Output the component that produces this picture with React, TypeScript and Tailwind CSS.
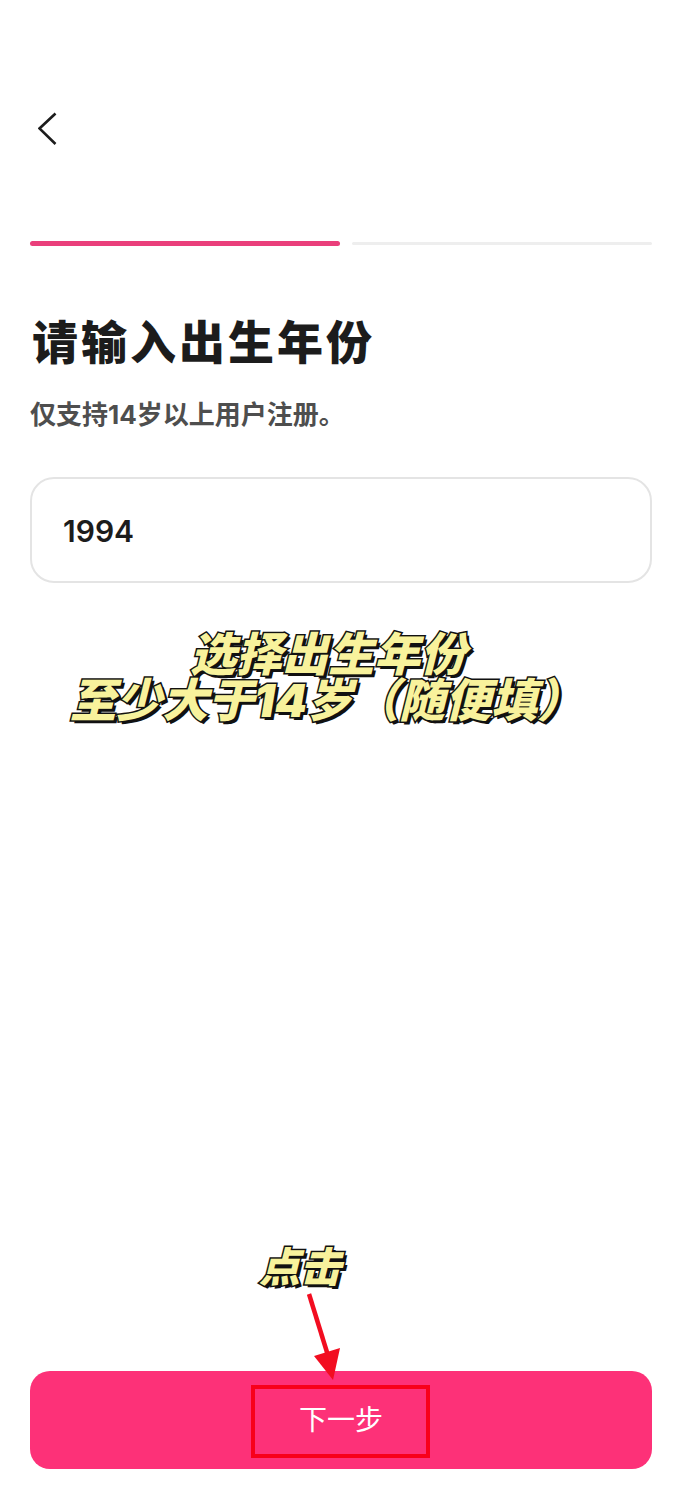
import React from 'react';

const cjk = 'font-["Inter","Noto_Sans_CJK_SC",sans-serif]';
const sticker =
  'font-["Inter","Noto_Sans_CJK_SC",sans-serif] font-black italic text-[#f8f29c] whitespace-nowrap [-webkit-text-stroke:3px_#111] [paint-order:stroke_fill] [text-shadow:3px_3px_0_#111]';

export default function App() {
  return (
    <div className={`relative flex h-[1500px] w-[682px] flex-col overflow-hidden bg-white px-[30px] ${cjk}`}>
      {/* Back button */}
      <div className="mt-[112px] h-[33px]">
        <svg width="20" height="33" viewBox="0 0 20 33" fill="none" className="ml-[8px]">
          <path d="M17.5 1.5 L1.5 16.5 L17.5 32" stroke="#1c1c1c" strokeWidth="2.6" />
        </svg>
      </div>

      {/* Progress */}
      <div className="mt-[96px] flex h-[5px] items-center gap-[12px]">
        <div className="h-[5px] w-[310px] rounded-full bg-[#ea3f7b]" />
        <div className="h-[3px] flex-1 rounded-full bg-[#eeeeee]" />
      </div>

      <h1 className="mt-[68px] ml-[2px] text-[46px] leading-[56px] font-black tracking-[3px] text-[#1c1c1c]">
        请输入出生年份
      </h1>
      <p className="mt-[29px] text-[26px] leading-[32px] font-bold text-[#4e4e4e]">仅支持14岁以上用户注册。</p>

      {/* Year input */}
      <div className="mt-[46px] flex h-[106px] items-center rounded-[24px] border-2 border-[#e4e4e4] pt-[2px] pl-[31px] text-[30px] font-semibold text-[#1c1c1c]">
        1994
      </div>

      {/* Next button */}
      <button className="mt-auto mb-[31px] flex h-[98px] items-center justify-center rounded-[20px] bg-[#fd3178] text-[28px] font-normal text-white">
        下一步
      </button>

      {/* Annotations over the page */}
      <div className={`absolute top-[631px] left-[70px] indent-[120px] text-[46px] leading-[46px] ${sticker}`}>
        选择出生年份
        <br />
        至少大于14岁（随便填）
      </div>
      <div className={`absolute top-[1244px] left-[259px] text-[41px] leading-[46px] ${sticker}`}>点击</div>

      <div className="absolute top-[1385px] left-[251px] h-[73px] w-[179px] border-[4px] border-[#f8001a]" />
      <svg width="60" height="100" viewBox="0 0 60 100" fill="none" className="absolute top-[1290px] left-[300px]">
        <path d="M9 4 L30 72" stroke="#f20d20" strokeWidth="4.5" />
        <path d="M14 66 L40 58 L33 90 Z" fill="#f20d20" />
      </svg>
    </div>
  );
}
